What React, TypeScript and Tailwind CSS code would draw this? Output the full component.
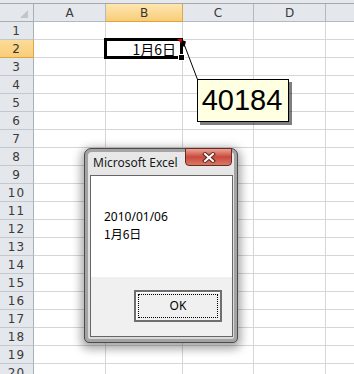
import React from "react";

const colW = ["w-[72px]", "w-[77px]", "w-[71px]", "w-[72px]"];
const colL = ["A", "B", "C", "D"];

function HeaderRow() {
  return (
    <div className="flex h-[18px]">
      <div className="relative w-[34px] h-full bg-[#e4e7eb] border-r border-b border-[#a9afb7]">
        <svg className="absolute left-[19px] top-[5px]" width="10" height="10" viewBox="0 0 10 10">
          <polygon points="9,1 9,9 1,9" fill="#c2c6cc" />
        </svg>
      </div>
      {colL.map((l, i) => (
        <div
          key={l}
          className={
            colW[i] +
            " h-full flex items-center justify-center border-r border-b pt-[1px] text-[12px] " +
            (l === "B"
              ? "bg-gradient-to-b from-[#fde6b0] to-[#f8cd78] border-r-[#d9a74c] border-b-[#e2a33c] text-[#333]"
              : "bg-[#e4e7eb] border-[#b3b9c0] text-[#3a3a3a]")
          }
        >
          {l}
        </div>
      ))}
      <div className="flex-1 h-full bg-[#e4e7eb] border-b border-[#b3b9c0]" />
    </div>
  );
}

function Row({ n }: { n: number }) {
  const sel = n === 2;
  return (
    <div className="flex h-[18px]">
      <div
        className={
          "w-[34px] h-full flex items-center justify-center border-r border-b text-[12px] tracking-[1px] " +
          (sel
            ? "bg-gradient-to-b from-[#fcdc98] to-[#f8cd78] border-r-[#d9a74c] border-b-[#e2a33c] text-[#333]"
            : "bg-[#e4e7eb] border-r-[#a9afb7] border-b-[#c3c8ce] text-[#3a3a3a]")
        }
      >
        {n}
      </div>
      {colW.map((w, i) => (
        <div
          key={i}
          className={w + " h-full border-r border-b border-[#d6d6d6] flex items-center justify-end pr-[6px]"}
        >
          {sel && i === 1 ? (
            <span className="font-['Noto_Sans_CJK_JP',sans-serif] text-[14px] leading-none text-black">
              1月6日
            </span>
          ) : null}
        </div>
      ))}
      <div className="flex-1 h-full border-b border-[#d6d6d6]" />
    </div>
  );
}

export default function App() {
  const rows = Array.from({ length: 20 }, (_, i) => i + 1);
  return (
    <div className="relative w-[354px] h-[374px] overflow-hidden bg-white font-['DejaVu_Sans',sans-serif]">
      <div className="h-[4px] bg-[#e6e8eb] border-b border-[#a3a9b1]" />
      <HeaderRow />
      {rows.map((n) => (
        <Row key={n} n={n} />
      ))}

      {/* selection box */}
      <div className="absolute left-[104px] top-[38px] w-[79px] h-[21px] border-[3px] border-black" />
      {/* fill handle */}
      <div className="absolute left-[178px] top-[54px] w-[7px] h-[7px] bg-black border border-white" />

      {/* comment leader line + indicator */}
      <svg className="absolute left-0 top-0 pointer-events-none" width="354" height="374" viewBox="0 0 354 374">
        <polygon points="177,39 182,39 182,44" fill="#e00000" />
        <line x1="184" y1="44" x2="197.5" y2="79.5" stroke="black" strokeWidth="1" />
        <polygon points="182,40 186,41.5 184.5,47 181,45" fill="black" />
      </svg>

      {/* comment box */}
      <div className="absolute left-[197px] top-[79px] w-[92px] h-[43px] border border-black bg-[#ffffe1] shadow-[3px_3px_0_rgba(0,0,0,0.5)] flex items-center justify-center">
        <span className="font-['Liberation_Sans',Arial,sans-serif] text-[29px] leading-none text-black pr-[2px]">
          40184
        </span>
      </div>

      {/* message box */}
      <div className="absolute left-[84px] top-[148px] w-[154px] h-[195px] rounded-t-[7px] rounded-b-[5px] border border-[#4b4b4b] bg-[#a4a4a4] p-[3px] shadow-[0_3px_10px_3px_rgba(0,0,0,0.35)]">
        <div className="w-full h-full flex flex-col rounded-t-[4px] rounded-b-[2px] bg-gradient-to-b from-[#e8e8e8] to-[#d9d9d9]">
          <div className="h-[23px] flex items-center pl-[5px] pb-[2px] font-['Noto_Sans',sans-serif] text-[12px] text-[#151a20] leading-none">
            Microsoft Excel
          </div>
          <div className="ml-[2px] mr-[1px] mb-[2px] flex-1 flex flex-col border border-[#666]">
            <div className="h-[101px] bg-white pl-[13px] pt-[32px] font-['Noto_Sans','Noto_Sans_CJK_JP',sans-serif] text-[12px] leading-[17px] text-black">
              <div>2010/01/06</div>
              <div className="font-['Noto_Sans_CJK_JP',sans-serif]">1月6日</div>
            </div>
            <div className="flex-1 bg-[#f0f0f0] flex justify-end items-start pt-[13px] pr-[10px]">
              <div className="relative w-[88px] h-[32px] border-2 border-[#6e6e6e] bg-[#f0f0f0] shadow-[inset_1px_1px_0_#ffffff] flex items-center justify-center font-['Noto_Sans',sans-serif] text-[12px] text-black">
                <div className="absolute inset-[2px] border border-dotted border-black" />
                OK
              </div>
            </div>
          </div>
        </div>
        {/* close button */}
        <div className="absolute top-[-1px] right-[5px] w-[47px] h-[18px] rounded-b-[4px] border border-[#6a2a24] bg-gradient-to-b from-[#e9a295] via-[#c9493b] to-[#d97767] flex items-center justify-center">
          <svg width="14" height="11" viewBox="0 0 14 11">
            <g strokeLinecap="square">
              <line x1="3" y1="2" x2="11" y2="9" stroke="#5a2620" strokeWidth="4" />
              <line x1="11" y1="2" x2="3" y2="9" stroke="#5a2620" strokeWidth="4" />
              <line x1="3" y1="2" x2="11" y2="9" stroke="#ffffff" strokeWidth="2" />
              <line x1="11" y1="2" x2="3" y2="9" stroke="#ffffff" strokeWidth="2" />
            </g>
          </svg>
        </div>
      </div>
    </div>
  );
}
